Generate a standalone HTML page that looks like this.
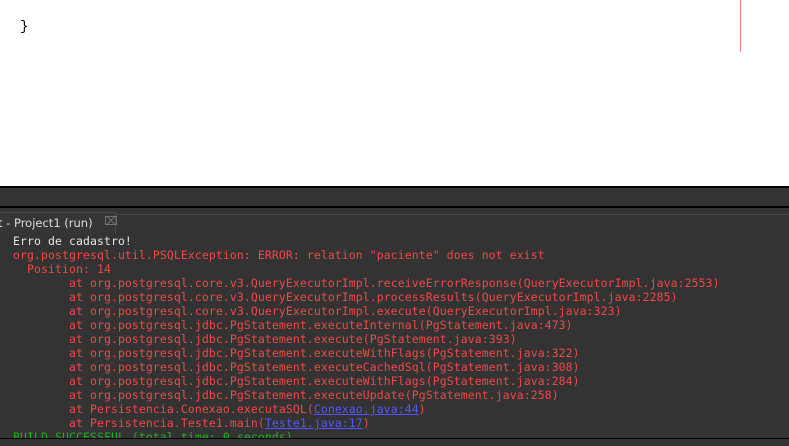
<!DOCTYPE html>
<html><head><style>
body{margin:0;width:789px;height:445px;overflow:hidden;background:#fff;position:relative;font-family:"DejaVu Sans Mono",monospace}
.a{position:absolute}
pre{margin:0;font-family:"DejaVu Sans Mono",monospace;font-size:11.45px;letter-spacing:0.11px;line-height:14px;color:#f04848}
.w{color:#e6e6e6}.g{color:#22b022}.l{color:#5656ff;text-decoration:underline}
</style></head><body>
<div class="a" style="left:20px;top:19px;font:14px 'Liberation Mono',monospace;color:#000">}</div>
<div class="a" style="left:740px;top:0;width:1px;height:52px;background:#f08080"></div>
<div class="a" style="left:0;top:186px;width:789px;height:259px;background:#333"></div>
<div class="a" style="left:0;top:186px;width:789px;height:2px;background:#000"></div>
<div class="a" style="left:0;top:206px;width:789px;height:2px;background:#000"></div>
<div class="a" style="left:116px;top:214px;width:673px;height:1px;background:#4a4a4a"></div>
<div class="a" style="left:0;top:212px;width:116px;height:22px;border-top:1px solid #4a4a4a;border-right:1px solid #4a4a4a;box-sizing:border-box;background:#353535"></div>
<div class="a" style="left:-2px;top:216px;font:11.5px 'DejaVu Sans',sans-serif;color:#ddd">t - Project1 (run)</div>
<div class="a" style="left:104px;top:214px;font:12px 'DejaVu Sans',sans-serif;color:#777">&#8999;</div>
<pre class="a" style="left:13px;top:234px"><span class="w">Erro de cadastro!</span>
org.postgresql.util.PSQLException: ERROR: relation "paciente" does not exist
  Position: 14
        at org.postgresql.core.v3.QueryExecutorImpl.receiveErrorResponse(QueryExecutorImpl.java:2553)
        at org.postgresql.core.v3.QueryExecutorImpl.processResults(QueryExecutorImpl.java:2285)
        at org.postgresql.core.v3.QueryExecutorImpl.execute(QueryExecutorImpl.java:323)
        at org.postgresql.jdbc.PgStatement.executeInternal(PgStatement.java:473)
        at org.postgresql.jdbc.PgStatement.execute(PgStatement.java:393)
        at org.postgresql.jdbc.PgStatement.executeWithFlags(PgStatement.java:322)
        at org.postgresql.jdbc.PgStatement.executeCachedSql(PgStatement.java:308)
        at org.postgresql.jdbc.PgStatement.executeWithFlags(PgStatement.java:284)
        at org.postgresql.jdbc.PgStatement.executeUpdate(PgStatement.java:258)
        at Persistencia.Conexao.executaSQL(<span class="l">Conexao.java:44</span>)
        at Persistencia.Teste1.main(<span class="l">Teste1.java:17</span>)
<span class="g">BUILD SUCCESSFUL (total time: 0 seconds)</span></pre>
<div class="a" style="left:0;top:438px;width:789px;height:7px;background:#333;border-top:1px solid #000"></div>
</body></html>
